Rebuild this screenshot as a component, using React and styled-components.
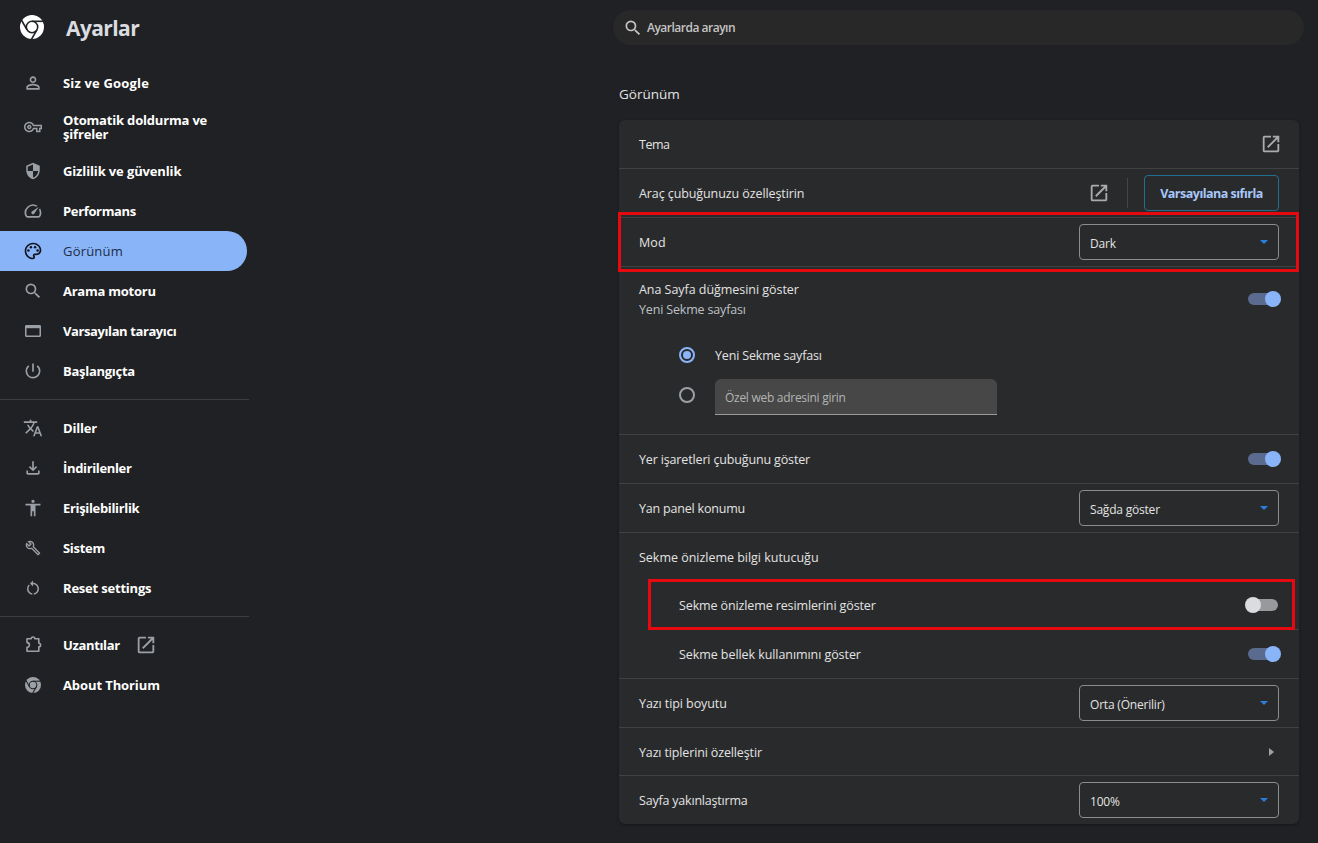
import React from "react"

import styled, { createGlobalStyle } from "styled-components"
import {
  MdPersonOutline,
  MdOutlineVpnKey,
  MdSecurity,
  MdOutlineSpeed,
  MdOutlinePalette,
  MdSearch,
  MdPowerSettingsNew,
  MdTranslate,
  MdOutlineFileDownload,
  MdAccessibility,
  MdOutlineBuild,
  MdRestartAlt,
  MdOpenInNew
} from "react-icons/md"

const GlobalStyle = createGlobalStyle`
  * {
    box-sizing: border-box;
  }

  body {
    margin: 0;
    background-color: #202124;
    color: #e3e3e3;
    font-family: 'Open Sans', 'Noto Sans', sans-serif;
    font-size: 12.5px;
    overflow: hidden;
  }
`

const Page = styled.div`
  display: flex;
  justify-content: space-between;
  width: 1318px;
  height: 843px;
`

const Sidebar = styled.aside`
  width: 249px;
`

const Brand = styled.header`
  display: flex;
  align-items: center;
  gap: 22px;
  height: 55px;
  padding: 0 0 1px 20px;
  color: #fff;
`

const BrandTitle = styled.h1`
  margin: 1px 0 0;
  color: #dadce0;
  font-size: 21px;
  font-weight: 700;
  letter-spacing: -0.6px;
`

const Menu = styled.nav`
  padding-top: 8px;
`

const MenuItem = styled.a`
  display: flex;
  align-items: center;
  gap: 20px;
  width: 247px;
  height: ${({ $tall }) => ($tall ? 48 : 40)}px;
  padding-left: 23px;
  border-radius: 0 20px 20px 0;
  background-color: ${({ $active }) => ($active ? "#8ab4f8" : "transparent")};
  color: ${({ $active }) => ($active ? "#202d45" : "#fff")};
  font-size: 13px;
  font-weight: ${({ $active }) => ($active ? 500 : 700)};
  line-height: 14px;

  svg {
    flex: none;
    color: ${({ $active }) => ($active ? "#10141c" : "#9aa0a6")};
  }
`

const IconSlot = styled.span`
  display: flex;
  align-items: center;
  justify-content: center;
  width: 20px;
  height: 20px;
`

const ExternalSlot = styled(IconSlot)`
  margin-left: -4px;
`

const MenuLabel = styled.span`
  max-width: 160px;
  letter-spacing: ${({ $spacing }) => $spacing}px;
`

const MenuDivider = styled.hr`
  height: 1px;
  margin: 8px 0;
  border: none;
  background-color: #3c3d40;
`

const Main = styled.main`
  width: 705px;
  padding-top: 10px;
`

const SearchBar = styled.div`
  display: flex;
  align-items: center;
  gap: 4px;
  width: 691px;
  height: 35px;
  padding-left: 10px;
  border-radius: 18px;
  background-color: #282828;
  color: #c4c4c4;
  font-size: 12px;
  font-weight: 600;
  letter-spacing: -0.5px;
`

const SectionTitle = styled.h2`
  margin: 39px 0 16px 6px;
  font-size: 13.5px;
  font-weight: 400;
  line-height: 20px;
`

const Card = styled.section`
  width: 680px;
  margin-left: 6px;
  border-radius: 6px;
  background-color: #292a2b;
  box-shadow: 0 1px 3px rgba(0, 0, 0, 0.35);
`

const Row = styled.div`
  position: relative;
  display: flex;
  align-items: center;
  justify-content: space-between;
  height: ${({ $height }) => $height || 49}px;
  padding: 0 20px;
  border-top: ${({ $plain }) => ($plain ? "none" : "1px solid #404142")};
`

const SubRow = styled(Row)`
  margin-left: 40px;
  padding-left: 20px;
`

const Label = styled.span`
  padding-top: ${({ $drop }) => $drop || 0}px;
  letter-spacing: ${({ $spacing }) => $spacing ?? -0.17}px;
`

const LabelStack = styled.div`
  display: flex;
  flex-direction: column;
  padding-top: 2px;
  line-height: 20px;
`

const Hint = styled(Label)`
  color: #bdc1c6;
`

const Actions = styled.div`
  display: flex;
  align-items: center;
  color: #a9abae;
`

const ThemeActions = styled(Actions)`
  margin-right: -3px;
`

const Separator = styled.span`
  width: 1px;
  height: 30px;
  margin: 0 16px 0 17px;
  background-color: #434547;
`

const OutlineButton = styled.button`
  width: 135px;
  height: 36px;
  padding: 0;
  border: 1px solid #22708f;
  border-radius: 4px;
  background: none;
  color: #a8c7fa;
  font: inherit;
  font-weight: 700;
  letter-spacing: -0.5px;
`

const SelectBox = styled.div`
  display: flex;
  align-items: center;
  justify-content: space-between;
  width: 200px;
  height: 36px;
  padding: 2px 10px 0;
  border: 1px solid #8b8c8d;
  border-radius: 4px;
  font-size: 12px;
  letter-spacing: -0.2px;
`

const Caret = styled.span`
  margin-bottom: 3px;
  border-top: 4px solid #2b7de0;
  border-right: 4px solid transparent;
  border-left: 4px solid transparent;
`

const Arrow = styled.span`
  margin-right: 5px;
  border-left: 5px solid #a0a2a4;
  border-top: 4px solid transparent;
  border-bottom: 4px solid transparent;
`

const Track = styled.span`
  display: flex;
  align-items: center;
  justify-content: ${({ $on }) => ($on ? "flex-end" : "flex-start")};
  width: 30px;
  height: 12px;
  margin-right: 1px;
  border-radius: 6px;
  background-color: ${({ $on }) => ($on ? "#5b6b90" : "#97999c")};
`

const Knob = styled.span`
  flex: none;
  width: 16px;
  height: 16px;
  margin: 0 -3px;
  border-radius: 50%;
  background-color: ${({ $on }) => ($on ? "#8ab4f8" : "#dadce0")};
`

const HomePageGroup = styled.div`
  height: 168px;
  border-top: 1px solid #404142;
`

const RadioList = styled.div`
  padding-top: 4px;
`

const RadioRow = styled.div`
  display: flex;
  align-items: center;
  gap: 20px;
  height: 40px;
  padding-left: 60px;
`

const Radio = styled.span`
  display: flex;
  align-items: center;
  justify-content: center;
  width: 16px;
  height: 16px;
  border: 2px solid ${({ $checked }) => ($checked ? "#8ab4f8" : "#9aa0a6")};
  border-radius: 50%;

  &::after {
    content: "";
    width: 8px;
    height: 8px;
    border-radius: 50%;
    background-color: ${({ $checked }) => ($checked ? "#8ab4f8" : "transparent")};
  }
`

const UrlField = styled.div`
  width: 282px;
  height: 36px;
  margin-top: 4px;
  padding: 1px 10px 0;
  border-bottom: 1px solid #9b9c9c;
  border-radius: 6px 6px 0 0;
  background-color: #464746;
  color: #b4b5b5;
  font-size: 12px;
  line-height: 36px;
  letter-spacing: -0.28px;
`

const Highlight = styled.div`
  position: absolute;
  top: ${({ $top }) => $top}px;
  left: ${({ $left }) => $left}px;
  z-index: 1;
  width: ${({ $width }) => $width}px;
  height: ${({ $height }) => $height}px;
  border: 3px solid #e60a10;
  pointer-events: none;
`

const ChromeIcon = ({ size }) => (
  <svg width={size} height={size} viewBox="0 0 24 24">
    <circle cx="12" cy="12" r="12" fill="currentColor" />
    <g fill="none" stroke="#202124" strokeWidth="1.6">
      <circle cx="12" cy="12" r="5.7" />
      <path d="M12 6.3H24.5" />
      <path d="M12 6.3H24.5" transform="rotate(120 12 12)" />
      <path d="M12 6.3H24.5" transform="rotate(240 12 12)" />
    </g>
  </svg>
)

const WindowIcon = ({ size }) => (
  <svg width={size} height={size} viewBox="0 0 20 20">
    <rect x="2.75" y="4.75" width="14.5" height="10.5" rx="0.8" fill="none" stroke="currentColor" strokeWidth="1.5" />
    <rect x="2.5" y="4.3" width="15" height="2.9" fill="currentColor" />
  </svg>
)

const PuzzleIcon = ({ size }) => (
  <svg width={size} height={size} viewBox="0 0 20 20" fill="none" stroke="currentColor" strokeWidth="1.6">
    <path
      strokeLinejoin="round"
      d="M4 3.8H8.2a1.8 1.8 0 0 1 3.6 0H15.8V8.2a1.8 1.8 0 0 1 0 3.6V16.2H4V12.4a2.4 2.4 0 0 0 0-4.8Z"
    />
  </svg>
)

const Toggle = ({ on }) => (
  <Track $on={on}>
    <Knob $on={on} />
  </Track>
)

const Select = ({ value }) => (
  <SelectBox>
    {value}
    <Caret />
  </SelectBox>
)

const menu = [
  [
    { label: "Siz ve Google", icon: MdPersonOutline, spacing: 0.17 },
    { label: "Otomatik doldurma ve şifreler", icon: MdOutlineVpnKey, size: 18, spacing: -0.18, tall: true },
    { label: "Gizlilik ve güvenlik", icon: MdSecurity, size: 18, spacing: -0.13 },
    { label: "Performans", icon: MdOutlineSpeed, spacing: -0.35 },
    { label: "Görünüm", icon: MdOutlinePalette, spacing: 0.2, active: true },
    { label: "Arama motoru", icon: MdSearch, spacing: -0.25 },
    { label: "Varsayılan tarayıcı", icon: WindowIcon, spacing: -0.4 },
    { label: "Başlangıçta", icon: MdPowerSettingsNew, spacing: -0.27 }
  ],
  [
    { label: "Diller", icon: MdTranslate, spacing: -0.2 },
    { label: "İndirilenler", icon: MdOutlineFileDownload, spacing: -0.35 },
    { label: "Erişilebilirlik", icon: MdAccessibility, spacing: -0.33 },
    { label: "Sistem", icon: MdOutlineBuild, size: 16, spacing: -0.3 },
    { label: "Reset settings", icon: MdRestartAlt, size: 18, spacing: -0.2 }
  ]
]

const App = () => {
  return (
    <>
      <GlobalStyle />
      <Page>
        <Sidebar>
          <Brand>
            <ChromeIcon size={24} />
            <BrandTitle>Ayarlar</BrandTitle>
          </Brand>
          <Menu>
            {menu.map((group, index) => (
              <React.Fragment key={index}>
                {group.map(({ label, icon: Icon, size, spacing, tall, active }) => (
                  <MenuItem key={label} $tall={tall} $active={active}>
                    <IconSlot>
                      <Icon size={size || 20} />
                    </IconSlot>
                    <MenuLabel $spacing={spacing}>{label}</MenuLabel>
                  </MenuItem>
                ))}
                <MenuDivider />
              </React.Fragment>
            ))}
            <MenuItem>
              <IconSlot>
                <PuzzleIcon size={20} />
              </IconSlot>
              <MenuLabel $spacing={-0.35}>Uzantılar</MenuLabel>
              <ExternalSlot>
                <MdOpenInNew size={22} />
              </ExternalSlot>
            </MenuItem>
            <MenuItem>
              <IconSlot>
                <ChromeIcon size={16} />
              </IconSlot>
              <MenuLabel $spacing={-0.1}>About Thorium</MenuLabel>
            </MenuItem>
          </Menu>
        </Sidebar>

        <Main>
          <SearchBar>
            <MdSearch size={20} />
            Ayarlarda arayın
          </SearchBar>

          <SectionTitle>Görünüm</SectionTitle>

          <Card>
            <Row $plain $height={48}>
              <Label $spacing={-0.5}>Tema</Label>
              <ThemeActions>
                <MdOpenInNew size={22} />
              </ThemeActions>
            </Row>
            <Row>
              <Label $spacing={-0.09}>Araç çubuğunuzu özelleştirin</Label>
              <Actions>
                <MdOpenInNew size={22} />
                <Separator />
                <OutlineButton>Varsayılana sıfırla</OutlineButton>
              </Actions>
            </Row>
            <Row>
              <Label $spacing={0.1}>Mod</Label>
              <Select value="Dark" />
              <Highlight $top={-6} $left={-1} $width={681} $height={60} />
            </Row>

            <HomePageGroup>
              <Row $plain $height={64}>
                <LabelStack>
                  <Label $spacing={-0.04}>Ana Sayfa düğmesini göster</Label>
                  <Hint>Yeni Sekme sayfası</Hint>
                </LabelStack>
                <Toggle on />
              </Row>
              <RadioList>
                <RadioRow>
                  <Radio $checked />
                  <Label>Yeni Sekme sayfası</Label>
                </RadioRow>
                <RadioRow>
                  <Radio />
                  <UrlField>Özel web adresini girin</UrlField>
                </RadioRow>
              </RadioList>
            </HomePageGroup>

            <Row>
              <Label $spacing={-0.15}>Yer işaretleri çubuğunu göster</Label>
              <Toggle on />
            </Row>
            <Row>
              <Label $spacing={-0.2}>Yan panel konumu</Label>
              <Select value="Sağda göster" />
            </Row>
            <Row>
              <Label $spacing={-0.02}>Sekme önizleme bilgi kutucuğu</Label>
            </Row>
            <SubRow $plain $height={48}>
              <Label $spacing={-0.12}>Sekme önizleme resimlerini göster</Label>
              <Toggle />
              <Highlight $top={-2} $left={-11} $width={647} $height={51} />
            </SubRow>
            <SubRow>
              <Label $spacing={-0.07}>Sekme bellek kullanımını göster</Label>
              <Toggle on />
            </SubRow>
            <Row>
              <Label $spacing={-0.08}>Yazı tipi boyutu</Label>
              <Select value="Orta (Önerilir)" />
            </Row>
            <Row $height={48}>
              <Label $drop={1} $spacing={-0.14}>Yazı tiplerini özelleştir</Label>
              <Arrow />
            </Row>
            <Row>
              <Label $spacing={-0.2}>Sayfa yakınlaştırma</Label>
              <Select value="100%" />
            </Row>
          </Card>
        </Main>
      </Page>
    </>
  );
};

export default App
